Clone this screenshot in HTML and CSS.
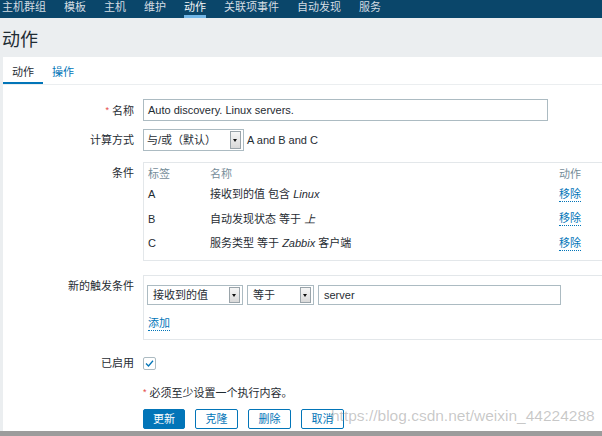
FILE: index.html
```html
<!DOCTYPE html>
<html lang="zh">
<head>
<meta charset="utf-8">
<title>动作</title>
<link rel="stylesheet" href="styles.css">
</head>
<body>
<nav class="topnav">
  <span class="nav-item">主机群组</span>
  <span class="nav-item">模板</span>
  <span class="nav-item">主机</span>
  <span class="nav-item">维护</span>
  <span class="nav-item active">动作</span>
  <span class="nav-item">关联项事件</span>
  <span class="nav-item">自动发现</span>
  <span class="nav-item">服务</span>
</nav>
<header class="page-head">动作</header>
<main class="panel">
  <div class="tabs">
    <span class="tab active">动作</span>
    <span class="tab link">操作</span>
  </div>
  <form class="form">
    <div class="row row-name">
      <label class="lbl"><span class="req">*</span>名称</label>
      <div class="field"><div class="input name-input">Auto discovery. Linux servers.</div></div>
    </div>
    <div class="row row-calc">
      <label class="lbl">计算方式</label>
      <div class="field inline">
        <div class="select calc-select"><span class="sel-text">与/或（默认）</span><span class="arrow"></span></div>
        <span class="calc-text">A and B and C</span>
      </div>
    </div>
    <div class="row row-box">
      <label class="lbl top">条件</label>
      <div class="field">
        <div class="box cond-box">
          <div class="cond-grid">
            <span class="th">标签</span><span class="th">名称</span><span class="th">动作</span>
            <span class="td">A</span><span class="td">接收到的值 包含 <em>Linux</em></span><span class="td"><span class="dlink">移除</span></span>
            <span class="td">B</span><span class="td">自动发现状态 等于 <em>上</em></span><span class="td"><span class="dlink">移除</span></span>
            <span class="td">C</span><span class="td">服务类型 等于 <em>Zabbix</em> 客户端</span><span class="td"><span class="dlink">移除</span></span>
          </div>
        </div>
      </div>
    </div>
    <div class="row row-box2">
      <label class="lbl top">新的触发条件</label>
      <div class="field">
        <div class="box new-box">
          <div class="new-line">
            <div class="select sel-a"><span class="sel-text">接收到的值</span><span class="arrow"></span></div>
            <div class="select sel-b"><span class="sel-text">等于</span><span class="arrow"></span></div>
            <div class="input val-input">server</div>
          </div>
          <div class="add-line"><span class="dlink">添加</span></div>
        </div>
      </div>
    </div>
    <div class="row row-enabled">
      <label class="lbl">已启用</label>
      <div class="field">
        <span class="checkbox"><svg width="13" height="13" viewBox="0 0 13 13"><polyline points="3,6.5 5.5,9 10,3.8" fill="none" stroke="#0275b8" stroke-width="1.3"/></svg></span>
      </div>
    </div>
    <div class="row row-note">
      <div class="lbl"></div>
      <div class="field note"><span class="req">*</span>必须至少设置一个执行内容。</div>
    </div>
    <div class="row row-buttons">
      <div class="lbl"></div>
      <div class="field buttons">
        <span class="btn primary">更新</span>
        <span class="btn">克隆</span>
        <span class="btn">删除</span>
        <span class="btn">取消</span>
      </div>
    </div>
  </form>
  <div class="watermark">https://blog.csdn.net/weixin_44224288</div>
</main>
<div class="bottom-bar"></div>
</body>
</html>
```

FILE: styles.css
```css
html { overflow: hidden; }
body {
  margin: 0;
  background: #ebeef0;
  font-family: "Liberation Sans", "Noto Sans CJK SC", sans-serif;
  font-size: 11px;
  color: #1f2c33;
  width: 602px;
  height: 436px;
  overflow: hidden;
}

.topnav {
  height: 18px;
  background: #0a466a;
  display: flex;
  gap: 18px;
  padding-left: 2px;
  box-sizing: border-box;
}
.nav-item {
  font-size: 11px;
  line-height: 15px;
  height: 18px;
  box-sizing: border-box;
  border-bottom: 3px solid transparent;
  color: #d3dce2;
}
.nav-item.active {
  color: #f4f7f9;
  border-bottom-color: #72b6e6;
}

.page-head {
  height: 39px;
  box-sizing: border-box;
  padding: 6px 0 0 2px;
  line-height: 33px;
  font-size: 18px;
  color: #1f2c33;
}

.panel {
  position: relative;
  margin-left: 3px;
  background: #ffffff;
  padding-bottom: 2px;
  overflow: hidden;
}

.tabs {
  display: flex;
  height: 28px;
  box-sizing: border-box;
  border-bottom: 1px solid #ebeef0;
}
.tab {
  height: 27px;
  box-sizing: border-box;
  padding: 5px 9px 0 9px;
  line-height: 20px;
  border-bottom: 2px solid transparent;
}
.tab.active { border-bottom-color: #0275b8; color: #1f2c33; }
.tab.link { color: #0275b8; }

.form {
  display: flex;
  flex-direction: column;
  padding-top: 14px;
}
.row { display: flex; gap: 9px; }
.lbl {
  width: 131px;
  flex: none;
  text-align: right;
  line-height: 22px;
}
.lbl.top { line-height: 14px; padding-top: 4px; }
.req {
  color: #e54545;
  font-size: 9px;
  margin-right: 3px;
  vertical-align: 2px;
}
.field { flex: 1; min-width: 0; }
.field.inline { display: flex; align-items: center; gap: 3px; }

.input {
  border: 1px solid #acbbc2;
  box-sizing: border-box;
  background: #fff;
  white-space: nowrap;
}
.name-input {
  width: 405px;
  height: 22px;
  line-height: 20px;
  padding-left: 4px;
}

.select {
  display: flex;
  align-items: stretch;
  border: 1px solid #acbbc2;
  box-sizing: border-box;
  background: #fff;
  padding: 1px 1px 1px 0;
}
.sel-text { flex: 1; white-space: nowrap; }
.arrow {
  width: 11px;
  flex: none;
  background: linear-gradient(#f6f6f6, #d9d9d9);
  border: 1px solid #9aa4aa;
  box-sizing: border-box;
  position: relative;
}
.arrow::after {
  content: "";
  position: absolute;
  left: 2px;
  top: 50%;
  margin-top: -1px;
  border-left: 2.5px solid transparent;
  border-right: 2.5px solid transparent;
  border-top: 3px solid #111;
}

.row-calc { margin-top: 7px; }
.calc-select {
  width: 101px;
  height: 22px;
  line-height: 18px;
}
.calc-select .sel-text { padding-left: 3px; }
.calc-select .arrow { margin-right: 1px; }

.box {
  border: 1px solid #e3e7ea;
  width: 480px;
  box-sizing: border-box;
}

.row-box { margin-top: 11px; }
.cond-box { padding: 5px 4px 4px 4px; }
.cond-grid {
  display: grid;
  grid-template-columns: 62px 349px auto;
  grid-template-rows: 14px 24.5px 24.5px 24.5px;
  align-items: center;
}
.th { color: #768d99; line-height: 13px; align-self: start; }
.td { line-height: 14px; white-space: nowrap; }
em { font-style: italic; }
.dlink {
  color: #0275b8;
  border-bottom: 1px dotted #0275b8;
  line-height: 13px;
  display: inline-block;
}

.row-box2 { margin-top: 14px; }
.new-box { padding: 9px 3px 8px 3px; }
.new-line { display: flex; gap: 4px; height: 20px; }
.new-line .select { height: 20px; line-height: 16px; }
.new-line .sel-text { padding-left: 5px; }
.sel-a { width: 96px; }
.sel-b { width: 67px; }
.sel-a .arrow, .sel-b .arrow { margin-right: 1px; }
.val-input {
  width: 243px;
  height: 20px;
  line-height: 18px;
  padding-left: 5px;
}
.add-line { margin-top: 12px; padding-left: 1px; height: 14px; }

.row-enabled { margin-top: 17px; }
.row-enabled .lbl { line-height: 13px; }
.checkbox {
  display: block;
  width: 13px;
  height: 13px;
  box-sizing: border-box;
  border: 1px solid #acbbc2;
  border-radius: 2px;
  position: relative;
}
.checkbox svg { position: absolute; left: -1px; top: -1px; }

.row-note { margin-top: 15px; }
.row-note .lbl { line-height: 14px; }
.note { line-height: 14px; }
.note .req { margin-right: 3px; }

.row-buttons { margin-top: 9px; }
.buttons { display: flex; gap: 10px; }
.btn {
  width: 43px;
  height: 20px;
  box-sizing: border-box;
  border: 1px solid #0275b8;
  border-radius: 2px;
  color: #0275b8;
  background: #fff;
  text-align: center;
  line-height: 18px;
}
.btn.primary { background: #0275b8; color: #fff; width: 42px; }

.watermark {
  position: absolute;
  left: 328px;
  top: 350px;
  font-family: "Liberation Sans", sans-serif;
  font-size: 15.5px;
  line-height: 18px;
  color: rgba(110, 110, 110, 0.38);
  white-space: nowrap;
  pointer-events: none;
}

.bottom-bar {
  height: 8px;
  background: #9c9c9c;
}
```
